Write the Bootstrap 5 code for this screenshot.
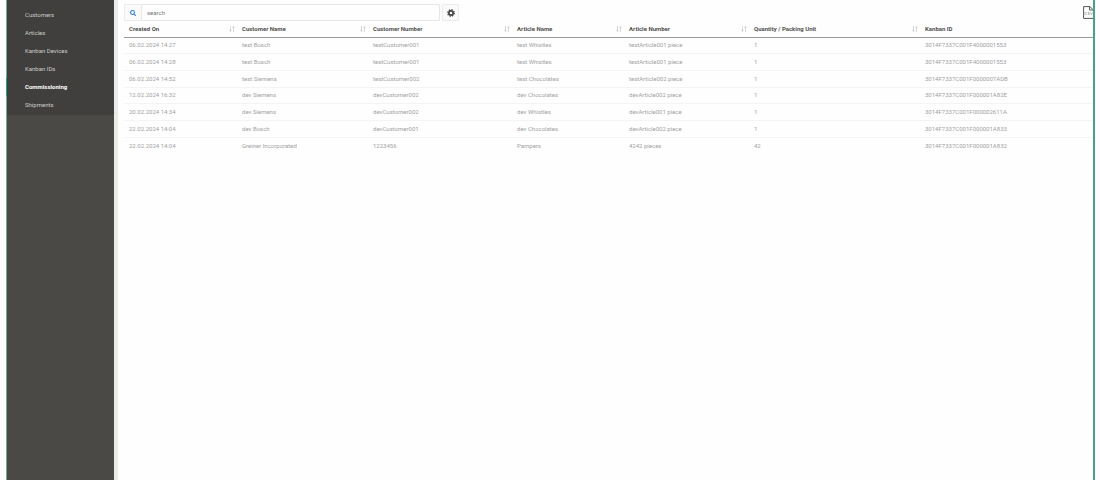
<!DOCTYPE html>
<html lang="en">
<head>
<meta charset="utf-8">
<meta name="viewport" content="width=device-width, initial-scale=1">
<title>Commissioning</title>
<link rel="stylesheet" href="https://cdn.jsdelivr.net/npm/bootstrap@5.3.0/dist/css/bootstrap.min.css">
<style>
  body { font: 6px/8px Roboto, "Liberation Sans", Arial, sans-serif; background: #fefefe; color: #555; }
  .shell { margin: 0 5px 0 6px; border-right: 2px solid #4b9d8d; }
  .sidebar { width: 108px; background: #4a4946; border-left: 1px solid #6fa9a3; }
  .menu { background: #403f3d; padding: 6px 0 1px; }
  .menu .nav-link { height: 18px; padding: 5px 0 5px 18px; color: #cccbc9; line-height: 8px; border-radius: 0; }
  .menu .nav-link:hover { color: #fff; }
  .menu .nav-link.active { color: #fff; font-weight: 700; box-shadow: -1px 0 #1fa287; }
  .gutter { width: 4px; background: #ecebea; }
  .content { padding: 4px 0 0 6px; }
  .search { width: 316px; height: 17px; }
  .search .btn, .gear { width: 17px; height: 17px; border: 1px solid #ececec; border-radius: 1px; background: #fafafa; }
  .search .btn { border-right: 0; color: #2b7de0; }
  .search .form-control { font-size: 6px; line-height: 8px; padding: 0 5px; min-height: 0; height: 17px; border: 1px solid #e6e6e6; border-radius: 1px; color: #777; background: #fefefe; }
  .search .form-control::placeholder { color: #777; }
  .gear { margin-left: 2px; color: #444; }
  .grid { table-layout: fixed; --bs-table-bg: transparent; --bs-table-color: #a2a2a2; color: #a2a2a2; }
  .grid th, .grid td { height: 17px; padding: 0 2px 0 5px; border-bottom: 1px solid #f4f4f4; white-space: nowrap; vertical-align: middle; line-height: 8px; }
  .grid tr:nth-child(3n+1) td { height: 16px; }
  .grid tr:last-child td { border-bottom: 0; height: 17px; }
  .grid thead tr:last-child th { height: 16px; border-bottom: 1px solid #999; color: #505050; }
  .grid .sort { width: 6px; height: 6px; color: #c8c8c8; }
</style>
</head>
<body>
<div class="shell d-flex min-vh-100">
  <nav class="sidebar flex-shrink-0" aria-label="Main">
    <div class="menu nav flex-column">
      <a class="nav-link" href="#customers">Customers</a>
      <a class="nav-link" href="#articles">Articles</a>
      <a class="nav-link" href="#devices">Kanban Devices</a>
      <a class="nav-link" href="#ids">Kanban IDs</a>
      <a class="nav-link active" aria-current="page" href="#commissioning">Commissioning</a>
      <a class="nav-link" href="#shipments">Shipments</a>
    </div>
  </nav>
  <div class="gutter flex-shrink-0"></div>
  <main class="content flex-grow-1 overflow-hidden">
    <div class="d-flex align-items-center">
      <form class="search d-flex" role="search">
        <button class="btn p-0 d-flex align-items-center justify-content-center flex-shrink-0" type="button" aria-label="Search">
          <svg width="6" height="6" viewBox="0 0 14 14" fill="none" stroke="currentColor" stroke-width="2.4"><circle cx="5.8" cy="5.8" r="4.500"/><path d="M9 9l4.500 4.500"/></svg>
        </button>
        <input class="form-control" type="text" placeholder="search" aria-label="Search text">
      </form>
      <button class="gear btn p-0 d-flex align-items-center justify-content-center" type="button" aria-label="Settings">
        <svg width="8" height="8" viewBox="0 0 16 16" fill="none" stroke="currentColor"><circle cx="8" cy="8" r="4.3" stroke-width="3.4"/><circle cx="8" cy="8" r="6.6" stroke-width="2.6" stroke-dasharray="2.6 2.583"/></svg>
      </button>
      <button class="btn p-0 border-0 ms-auto d-flex" type="button" aria-label="Export CSV">
        <svg width="10" height="13" viewBox="0 0 10 13" fill="none" stroke="#555"><path d="M10 12.4H.6V.6H7L10 3.6M6.6 .6V4H10"/><path d="M3.700 6.500H2v2h1.700M6.500 6.500H5v1h1.300v1H4.800M7.500 6.300l.9 2.200.9-2.200" stroke="#999" stroke-width=".6"/></svg>
      </button>
    </div>
    <table class="grid table mb-0">
      <colgroup id="cols"></colgroup>
      <thead><tr id="head"></tr></thead>
      <tbody id="rows"></tbody>
    </table>
  </main>
</div>
<script src="https://cdn.jsdelivr.net/npm/bootstrap@5.3.0/dist/js/bootstrap.bundle.min.js"></script>
<script>
  const columns = [
    ["Created On", 113], ["Customer Name", 131], ["Customer Number", 144], ["Article Name", 112],
    ["Article Number", 125], ["Quantity / Packing Unit", 171], ["Kanban ID", 173]
  ];
  const rows = [
    ["06.02.2024 14:27", "test Bosch", "testCustomer001", "test Whistles", "testArticle001 piece", "1", "3014F7337C001F4000001553"],
    ["06.02.2024 14:28", "test Bosch", "testCustomer001", "test Whistles", "testArticle001 piece", "1", "3014F7337C001F4000001553"],
    ["06.02.2024 14:52", "test Siemens", "testCustomer002", "test Chocolates", "testArticle002 piece", "1", "3014F7337C001F0000007ADB"],
    ["12.02.2024 16:32", "dev Siemens", "devCustomer002", "dev Chocolates", "devArticle002 piece", "1", "3014F7337C001F000001A82E"],
    ["20.02.2024 14:34", "dev Siemens", "devCustomer002", "dev Whistles", "devArticle001 piece", "1", "3014F7337C001F000002611A"],
    ["22.02.2024 14:04", "dev Bosch", "devCustomer001", "dev Chocolates", "devArticle002 piece", "1", "3014F7337C001F000001A833"],
    ["22.02.2024 14:04", "Greiner Incorporated", "1223456", "Pampers", "4242 pieces", "42", "3014F7337C001F000001A832"]
  ];
  const total = columns.reduce((sum, c) => sum + c[1], 0);
  const sort = '<svg class="sort" viewBox="0 0 6 6" fill="none" stroke="currentColor" stroke-width=".7"><path d="M1.500 0v5.500M.3 4.300l1.200 1.200 1.200-1.200M4.500 6V.5M3.300 1.700L4.500 .5l1.200 1.200"/></svg>';
  document.getElementById("cols").innerHTML = columns.map(c => `<col style="width:${c[1] / total * 100}%">`).join("");
  document.getElementById("head").innerHTML = columns.map((c, i) =>
    `<th scope="col"><div class="d-flex align-items-center justify-content-between"><span>${c[0]}</span>${i < 6 ? sort : ""}</div></th>`).join("");
  document.getElementById("rows").innerHTML = rows.map(r => `<tr>${r.map(v => `<td>${v}</td>`).join("")}</tr>`).join("");
</script>
</body>
</html>
